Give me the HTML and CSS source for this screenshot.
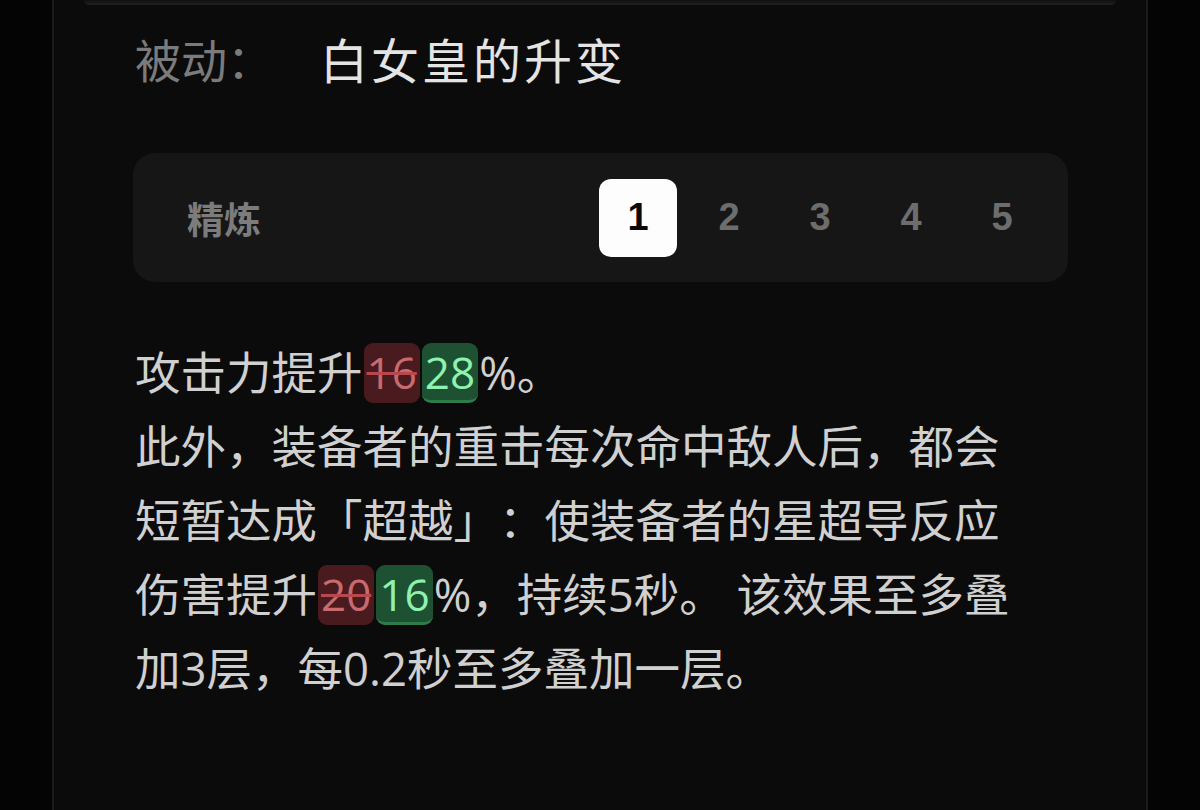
FILE: index.html
```html
<!DOCTYPE html>
<html>
  <head>
    <meta charset="UTF-8" />
    <meta name="viewport" content="width=device-width, initial-scale=1.0" />
    <title>白女皇的升变</title>
    <link rel="stylesheet" href="styles.css">
  </head>
  <body>
    <div class="panel">
      <div class="top-cap"></div>
      <div class="panel-body">
        <div class="passive-title">
          <span class="passive-label">被动：</span>
          <span class="passive-name">白女皇的升变</span>
        </div>

        <div class="refine-card">
          <div class="refine-label">精炼</div>
          <div class="refine-levels">
            <div class="refine-level active">1</div>
            <div class="refine-level">2</div>
            <div class="refine-level">3</div>
            <div class="refine-level">4</div>
            <div class="refine-level">5</div>
          </div>
        </div>

        <p class="passive-desc">
          攻击力提升<span class="diff diff-old">16</span><span class="diff diff-new">28</span>%。<br />
          此外，装备者的重击每次命中敌人后，都会<br />
          短暂达成「超越」：使装备者的星超导反应<br />
          伤害提升<span class="diff diff-old">20</span><span class="diff diff-new">16</span>%，持续5秒。 该效果至多叠<br />
          加3层，每0.2秒至多叠加一层。
        </p>
      </div>
    </div>
  </body>
</html>
```

FILE: styles.css
```css
* {
  box-sizing: border-box;
  margin: 0;
  padding: 0;
}

body {
  background-color: #040404;
  font-family: 'Noto Sans CJK SC', sans-serif;
  text-spacing-trim: space-all;
  height: 810px;
  overflow: hidden;
}

.panel {
  margin: 0 52px 0 52px;
  height: 810px;
  background-color: #0b0b0b;
  border-left: 2px solid #1a1a1a;
  border-right: 2px solid #1a1a1a;
}

.top-cap {
  height: 5px;
  margin: 0 30px;
  background: linear-gradient(#0f0f0f, #222);
  border-radius: 0 0 22px 22px;
}

.panel-body {
  padding: 21px 78px 0 81px;
}

.passive-title {
  display: flex;
  align-items: center;
  height: 64px;
}

.passive-label {
  color: #7b7b7b;
  font-size: 46px;
  width: 185px;
}

.passive-name {
  color: #e4e4e4;
  font-size: 48px;
  letter-spacing: 3px;
}

.refine-card {
  display: flex;
  align-items: center;
  justify-content: space-between;
  margin-top: 63px;
  margin-left: -2px;
  padding: 26px 27px 25px 54px;
  background-color: #161616;
  border-radius: 22px;
}

.refine-label {
  color: #7c7c7c;
  font-size: 37px;
  font-weight: 700;
}

.refine-levels {
  display: flex;
  gap: 13px;
}

.refine-level {
  width: 78px;
  height: 78px;
  display: flex;
  align-items: center;
  justify-content: center;
  padding-bottom: 2px;
  font-family: 'Liberation Sans', Arial, sans-serif;
  font-size: 38px;
  font-weight: 700;
  color: #6d6d6d;
  border-radius: 12px;
}

.refine-level.active {
  background-color: #fdfdfd;
  color: #0a0a0a;
}

.passive-desc {
  margin-top: 53px;
  color: #d0d0d0;
  font-family: 'Open Sans', 'Noto Sans CJK SC', sans-serif;
  font-size: 45.5px;
  line-height: 74px;
  white-space: nowrap;
}

.diff {
  display: inline-block;
  height: 60px;
  line-height: 58px;
  padding: 0 3px;
  margin: 0 1px;
  border-radius: 9px;
  font-size: 44px;
  vertical-align: 1px;
}

.diff-old {
  background-color: #4a1b1e;
  color: #c86a6e;
  text-decoration: line-through;
  text-decoration-color: #b8484d;
  text-decoration-thickness: 3px;
}

.diff-new {
  background-color: #1d5131;
  color: #8ef2b0;
  border-bottom: 3px solid #2f7c4b;
}
```
